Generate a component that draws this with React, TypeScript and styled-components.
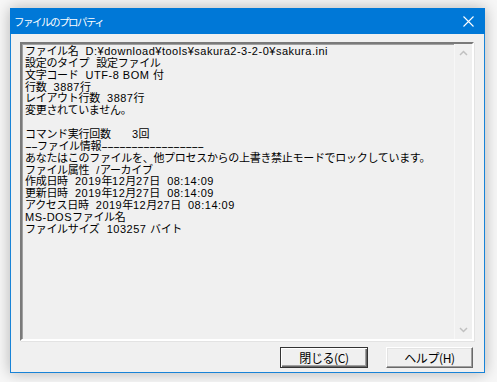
import React from "react";
import styled, { createGlobalStyle } from "styled-components";

const Global = createGlobalStyle`
  html, body { margin: 0; padding: 0; background: #f4f4f4; }
  body { width: 497px; height: 382px; overflow: hidden; }
`;

const Page = styled.div`
  width: 497px;
  height: 382px;
  padding: 8px 0 0 10px;
  box-sizing: border-box;
  background: #f7f7f7;
`;

const Window = styled.div`
  width: 475px;
  height: 365px;
  box-sizing: border-box;
  border: 1px solid #1883d7;
  border-top: none;
  background: #f0f0f0;
  box-shadow: 0 0 14px rgba(0, 0, 0, 0.28);
  display: flex;
  flex-direction: column;
  font-family: "Noto Sans CJK JP", "Liberation Sans", sans-serif;
`;

const TitleBar = styled.div`
  height: 26px;
  margin: 0 -1px;
  background: #0078d7;
  color: #fff;
  display: flex;
  align-items: center;
  justify-content: space-between;
  padding: 0 10px 0 4px;
  flex: none;
`;

const Title = styled.span`
  font-size: 10.5px;
  letter-spacing: -1.5px;
  margin-top: 1px;
`;

const CloseIcon = styled.svg`
  width: 11px;
  height: 11px;
  margin-right: 1px;
`;

const Client = styled.div`
  flex: 1;
  display: flex;
  flex-direction: column;
  padding: 8px 10px 5px 9px;
`;

const Edit = styled.div`
  height: 299px;
  display: flex;
  box-sizing: border-box;
  border-style: solid;
  border-width: 2px;
  border-color: #7a7a7a #ffffff #ffffff #7a7a7a;
  box-shadow: inset 1px 1px 0 #a0a0a0, 1px 1px 0 #e3e3e3;
  background: #f0f0f0;
`;

const TextArea = styled.div`
  flex: 1;
  padding: 2px 0 0 3px;
  font-family: "Liberation Sans", "Noto Sans CJK JP", sans-serif;
  font-size: 11px;
  line-height: 11.87px;
  color: #000;
  white-space: pre;
  letter-spacing: -0.3px;
`;

const Line = styled.div`
  height: 11.87px;
`;

const Latin = styled.span`
  letter-spacing: 0.5px;
`;

const Dashes = styled.span`
  display: inline-block;
  letter-spacing: -0.5px;
  transform: scaleX(1.9);
  transform-origin: left center;
`;

const ScrollBar = styled.div`
  width: 17px;
  display: flex;
  flex-direction: column;
  justify-content: space-between;
  align-items: center;
  border-left: 1px solid #f7f7f7;
  background: #f0f0f0;
  padding: 6px 0 6px;
`;

const Chevron = styled.svg`
  width: 9px;
  height: 6px;
`;

const ButtonRow = styled.div`
  display: flex;
  justify-content: flex-end;
  gap: 18px;
  margin-top: 6px;
  padding-right: 1px;
`;

const Button = styled.button<{ $primary?: boolean }>`
  width: ${(p) => (p.$primary ? 88 : 87)}px;
  height: 21px;
  box-sizing: border-box;
  background: #f0f0f0;
  font-family: "Noto Sans CJK JP", "Liberation Sans", sans-serif;
  font-size: 12px;
  letter-spacing: -0.4px;
  color: #000;
  padding: 0;
  border-style: solid;
  border-width: 1px;
  border-color: ${(p) =>
    p.$primary ? "#333 #333 #333 #333" : "#fff #696969 #696969 #fff"};
  box-shadow: ${(p) =>
    p.$primary
      ? "inset 1px 1px 0 #fff, inset -1px -1px 0 #696969, inset -2px -2px 0 #a0a0a0"
      : "inset -1px -1px 0 #a0a0a0, inset 1px 1px 0 #e3e3e3"};
  display: flex;
  align-items: center;
  justify-content: center;
`;

const lines = [
  "ファイル名  D:¥download¥tools¥sakura2-3-2-0¥sakura.ini",
  "設定のタイプ  設定ファイル",
  "文字コード  UTF-8 BOM 付",
  "行数  3887行",
  "レイアウト行数  3887行",
  "変更されていません。",
  "",
  "コマンド実行回数      3回",
  "--ファイル情報-----------------",
  "あなたはこのファイルを、他プロセスからの上書き禁止モードでロックしています。",
  "ファイル属性  /アーカイブ",
  "作成日時  2019年12月27日  08:14:09",
  "更新日時  2019年12月27日  08:14:09",
  "アクセス日時  2019年12月27日  08:14:09",
  "MS-DOSファイル名",
  "ファイルサイズ  103257 バイト",
];

// Liberation Sans hyphen advance at 11px ≈ 3.66px; letter-spacing -0.5 => 3.16px
const DASH_ADVANCE = 3.16;
const DASH_SCALE = 1.9;

function renderLine(text: string) {
  const parts = text.split(/(-{2,}|[\x20-\x7E¥]+)/).filter((s) => s.length > 0);
  return parts.map((p, i) => {
    if (/^-{2,}$/.test(p)) {
      const extra = p.length * DASH_ADVANCE * (DASH_SCALE - 1);
      return (
        <Dashes key={i} style={{ marginRight: extra }}>
          {p}
        </Dashes>
      );
    }
    if (/^[\x20-\x7E¥]+$/.test(p)) return <Latin key={i}>{p}</Latin>;
    return <React.Fragment key={i}>{p}</React.Fragment>;
  });
}

export default function App() {
  return (
    <Page>
      <Global />
      <Window>
        <TitleBar>
          <Title>ファイルのプロパティ</Title>
          <CloseIcon viewBox="0 0 11 11">
            <path d="M0.5 0.5 L10.5 10.5 M10.5 0.5 L0.5 10.5" stroke="#fff" strokeWidth="1.1" fill="none" />
          </CloseIcon>
        </TitleBar>
        <Client>
          <Edit>
            <TextArea>
              {lines.map((l, i) => (
                <Line key={i}>{renderLine(l)}</Line>
              ))}
            </TextArea>
            <ScrollBar>
              <Chevron viewBox="0 0 9 6">
                <path d="M1 5 L4.5 1.5 L8 5" stroke="#c0c0c0" strokeWidth="1.5" fill="none" />
              </Chevron>
              <Chevron viewBox="0 0 9 6">
                <path d="M1 1 L4.5 4.5 L8 1" stroke="#c0c0c0" strokeWidth="1.5" fill="none" />
              </Chevron>
            </ScrollBar>
          </Edit>
          <ButtonRow>
            <Button $primary>閉じる(C)</Button>
            <Button>ヘルプ(H)</Button>
          </ButtonRow>
        </Client>
      </Window>
    </Page>
  );
}
